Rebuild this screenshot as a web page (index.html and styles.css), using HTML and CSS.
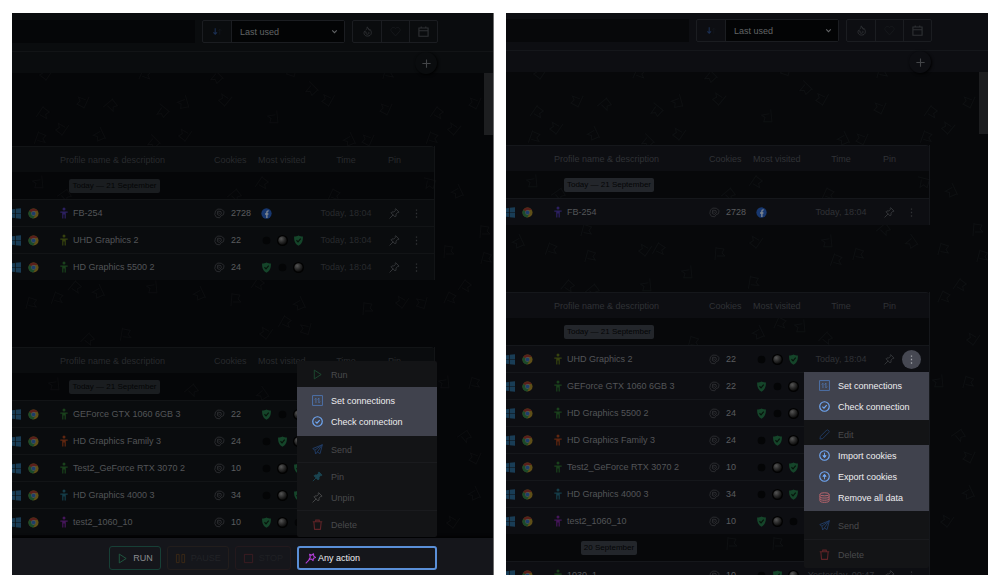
FILE: index.html
```
<!DOCTYPE html>
<html lang="en">
<head>
  <meta charset="utf-8">
  <title>Profiles</title>
  <link rel="stylesheet" href="styles.css">
</head>
<body>
  <!-- Icon sprite -->
  <svg class="sprite" aria-hidden="true">
    <defs>
      <radialGradient id="ballFill" cx="0.35" cy="0.3" r="0.8">
        <stop offset="0" stop-color="#555"/>
        <stop offset="0.5" stop-color="#2a2a2a"/>
        <stop offset="1" stop-color="#050505"/>
      </radialGradient>
    </defs>
    <symbol id="win" viewBox="0 0 12 12"><path fill="#1d4967" d="M0 1.5 5.4 1v4.6H0zM6.2.9 12 .3v5.3H6.2zM0 6.4h5.4V11L0 10.4zM6.2 6.4H12v5.3l-5.8-.6z"/></symbol>
    <symbol id="chrome" viewBox="0 0 12 12">
      <circle cx="6" cy="6" r="5.5" fill="#74601a"/>
      <path fill="#6e241d" d="M6 6 1.2 3.3A5.5 5.5 0 0 1 10.8 3.3H6z"/>
      <path fill="#1f5a31" d="M6 6 1.2 3.3A5.5 5.5 0 0 0 5.6 11.5L8.2 7.4z"/>
      <circle cx="6" cy="6" r="2.6" fill="#666"/>
      <circle cx="6" cy="6" r="2" fill="#204a80"/>
    </symbol>
    <symbol id="person" viewBox="0 0 8 12"><circle cx="4" cy="2" r="1.5" fill="currentColor"/><path d="M.3 5.2h7.4M4 4.6v3M2.8 5.4v6M5.2 5.4v6" fill="none" stroke="currentColor" stroke-width="1.2"/></symbol>
    <symbol id="cookie" viewBox="0 0 12 12"><path d="M4.2 1.2 8 1.4l3 2.4-.6 3.4-2.6 1.2-1.6 2.3-3.6-.6L.9 7.2l.7-4zM4 3.4l3.6.5.4 2.5-2.2 1.8L3.6 7zM4.6 5.3l1.7.6" fill="none" stroke="currentColor" stroke-width="0.9" stroke-linejoin="round"/></symbol>
    <symbol id="fb" viewBox="0 0 12 12"><circle cx="6" cy="6" r="5.6" fill="#17376f"/><path d="M6.4 11V5c0-1.3.6-1.9 2-1.8M4.4 6.6h3.7" fill="none" stroke="#7d8590" stroke-width="1.5"/></symbol>
    <symbol id="shield" viewBox="0 0 12 12"><path fill="#15452a" d="M6 .6c1.7.8 3 1 4.8 1 .2 4.8-1.1 8.2-4.8 10-3.7-1.800-5-5.200-4.800-10C3 1.600 4.300 1.400 6 .6z"/><path d="m3.800 5.700 1.700 1.800L8.400 4" fill="none" stroke="#07130b" stroke-width="1.300"/></symbol>
    <symbol id="dot" viewBox="0 0 12 12"><circle cx="6" cy="6" r="4.2" fill="#040506"/></symbol>
    <symbol id="ball" viewBox="0 0 12 12"><circle cx="6" cy="6" r="6" fill="#020202"/><circle cx="6" cy="6" r="4.6" fill="url(#ballFill)"/></symbol>
    <symbol id="pin" viewBox="0 0 12 12"><path d="M7.5 1 11 4.5l-1 .5-.4-.2-2 2 .1 2-1 1-4.500-4.500 1-1 2 .1 2-2-.2-.4zM4.300 7.700.9 11.100" fill="none" stroke="currentColor" stroke-linejoin="round" stroke-linecap="round"/></symbol>
    <symbol id="pin-solid" viewBox="0 0 12 12"><path d="M7.5 1 11 4.5l-1 .5-.4-.2-2 2 .1 2-1 1-4.500-4.500 1-1 2 .1 2-2-.2-.4zM4.300 7.700.9 11.100" fill="currentColor" stroke="currentColor" stroke-linejoin="round"/></symbol>
    <symbol id="dots" viewBox="0 0 12 12"><path d="M6 1.5v1.4M6 5.3v1.4M6 9.100v1.400" stroke="currentColor" stroke-width="1.400"/></symbol>
    <symbol id="play" viewBox="0 0 12 12"><path d="M2.500 1.200 10 6l-7.500 4.800z" fill="none" stroke="currentColor" stroke-linejoin="round"/></symbol>
    <symbol id="pause" viewBox="0 0 12 12"><path d="M1.500 1.500h3v9h-3zM7.500 1.500h3v9h-3z" fill="none" stroke="currentColor"/></symbol>
    <symbol id="stop" viewBox="0 0 12 12"><path d="M1.500 1.500h9v9h-9z" fill="none" stroke="currentColor"/></symbol>
    <symbol id="connections" viewBox="0 0 12 12"><path d="M.6.6h10.800v10.800H.6z" fill="none" stroke="currentColor"/><path d="M4.300 8.800V3.500M2.900 4.900l1.400-1.400M7.500 3.300v5.300M8.900 7.200 7.500 8.600M6.100 5l1.400-1.600" fill="none" stroke="currentColor" stroke-width="0.9"/></symbol>
    <symbol id="check" viewBox="0 0 12 12"><circle cx="6" cy="6" r="5.2" fill="none" stroke="currentColor" stroke-width="1.3"/><path d="m3.700 6.200 1.700 1.600 3-3.400" fill="none" stroke="currentColor" stroke-width="1.3"/></symbol>
    <symbol id="send" viewBox="0 0 12 12"><path d="M11.300.8.8 5l2.400 1.700L4 10.900l1.800-2.200 3 1.800zM3.200 6.700l8-5.900-5.400 7.900" fill="none" stroke="currentColor" stroke-linejoin="round"/></symbol>
    <symbol id="trash" viewBox="0 0 12 12"><path d="M.8 3h10.400M4 3V1.200h4V3M2 3l.8 8.300h6.400L10 3" fill="none" stroke="currentColor" stroke-width="1.2" stroke-linejoin="round"/></symbol>
    <symbol id="edit" viewBox="0 0 12 12"><path d="m1 11 .6-3L8.500 1.100q.6-.5 1.200 0l1.200 1.200q.5.6 0 1.200L4 10.400z" fill="none" stroke="currentColor" stroke-linejoin="round"/></symbol>
    <symbol id="import" viewBox="0 0 12 12"><circle cx="6" cy="6" r="5.2" fill="none" stroke="currentColor" stroke-width="1.2"/><path d="M6 3v4M4.200 6.200 6 8.500l1.800-2.300z" fill="currentColor" stroke="currentColor"/></symbol>
    <symbol id="export" viewBox="0 0 12 12"><circle cx="6" cy="6" r="5.2" fill="none" stroke="currentColor" stroke-width="1.2"/><path d="M6 9V5M4.200 5.800 6 3.500l1.800 2.300z" fill="currentColor" stroke="currentColor"/></symbol>
    <symbol id="data" viewBox="0 0 12 12"><path d="M1 2.600v7c0 1 2 1.700 5 1.700s5-.7 5-1.700v-7M1 5c0 1 2 1.600 5 1.600S11 6 11 5M1 7.400C1 8.400 3 9 6 9s5-.6 5-1.600" fill="none" stroke="currentColor"/><ellipse cx="6" cy="2.5" rx="5" ry="1.7" fill="none" stroke="currentColor"/></symbol>
    <symbol id="wand" viewBox="0 0 12 12"><path d="M.8 11.200 5 7M5 1.500l2.200 1L9.300.8l.2 2.600 2 1.400-2.300 1-.4 2.500-1.800-1.700-2.600.3 1.400-2.200z" fill="none" stroke="currentColor" stroke-width="1.2" stroke-linejoin="round"/></symbol>
    <symbol id="sort" viewBox="0 0 12 12"><path d="M3.500 2.500v6.500M1.500 7l2 2 2-2" fill="none" stroke="#1b2f52" stroke-width="1.2"/><path d="M8.500 9.500v-6M7 5l1.500-1.500L10 5" fill="none" stroke="#13161b"/></symbol>
    <symbol id="chevron" viewBox="0 0 12 12"><path d="m3.500 4.800 2.500 2.500 2.500-2.500" fill="none" stroke="currentColor" stroke-width="1.2"/></symbol>
    <symbol id="fire" viewBox="0 0 12 12"><path d="M5.500 1c2.600 1.400 1 3.200 2.400 3.800.6-.2.700-.8.500-1.300 3 2.800 2.200 7.500-2.300 7.500C2.300 11 1.300 7.600 3 5.400c.3 1 .8 1.300 1.600 1.200C3.800 7.800 4.500 9 6 9c1.800 0 2-1.700 1-2.600M5.500 1c.6 1.800-.5 2.700-1.500 3.500" fill="none" stroke="currentColor"/></symbol>
    <symbol id="heart" viewBox="0 0 12 12"><path d="M6 10.800 1.300 5.700C-.3 3 3.600-.2 6 2.800c2.400-3 6.300.2 4.700 2.900z" fill="none" stroke="currentColor"/></symbol>
    <symbol id="calendar" viewBox="0 0 12 12"><path d="M1 2.200h10v9H1zM1 5.200h10M3.500.5v1.700M8.500.5v1.700" fill="none" stroke="currentColor" stroke-width="1.2"/></symbol>
    <symbol id="plus" viewBox="0 0 12 12"><path d="M6 1.500v9M1.500 6h9" stroke="currentColor" stroke-width="1.2"/></symbol>

    <!-- Scattered flags behind the tables -->
    <g id="flag"><path d="M-4 7-3-6M-3-5l8 1-2 4 3 3-8 0"/></g>
    <symbol id="flags-top" overflow="visible">
      <g fill="none" stroke="currentColor">
        <use href="#flag" transform="translate(34 1) rotate(210)"/>
        <use href="#flag" transform="translate(133 1) rotate(20)"/>
        <use href="#flag" transform="translate(205 4) rotate(130)"/>
        <use href="#flag" transform="translate(280 -2) rotate(190)"/>
        <use href="#flag" transform="translate(376 0) rotate(10)"/>
        <use href="#flag" transform="translate(71 29) rotate(200)"/>
        <use href="#flag" transform="translate(99 32) rotate(45)"/>
        <use href="#flag" transform="translate(31 40) rotate(30)"/>
        <use href="#flag" transform="translate(151 38) rotate(125)"/>
        <use href="#flag" transform="translate(172 30) rotate(160)"/>
        <use href="#flag" transform="translate(213 27) rotate(215)"/>
        <use href="#flag" transform="translate(50 56) rotate(210)"/>
        <use href="#flag" transform="translate(28 65) rotate(15)"/>
        <use href="#flag" transform="translate(88 62) rotate(150)"/>
        <use href="#flag" transform="translate(142 69) rotate(130)"/>
        <use href="#flag" transform="translate(173 62) rotate(210)"/>
        <use href="#flag" transform="translate(300 16) rotate(130)"/>
        <use href="#flag" transform="translate(316 27) rotate(205)"/>
        <use href="#flag" transform="translate(374 36) rotate(200)"/>
        <use href="#flag" transform="translate(262 45) rotate(170)"/>
        <use href="#flag" transform="translate(425 40) rotate(30)"/>
        <use href="#flag" transform="translate(463 30) rotate(200)"/>
        <use href="#flag" transform="translate(442 56) rotate(215)"/>
        <use href="#flag" transform="translate(338 67) rotate(150)"/>
        <use href="#flag" transform="translate(356 67) rotate(200)"/>
        <use href="#flag" transform="translate(420 65) rotate(15)"/>
        <use href="#flag" transform="translate(27 110) rotate(170)"/>
        <use href="#flag" transform="translate(53 122) rotate(50)"/>
        <use href="#flag" transform="translate(223 122) rotate(45)"/>
        <use href="#flag" transform="translate(250 110) rotate(30)"/>
        <use href="#flag" transform="translate(322 122) rotate(20)"/>
        <use href="#flag" transform="translate(418 110) rotate(100)"/>
        <use href="#flag" transform="translate(446 119) rotate(150)"/>
        <use href="#flag" transform="translate(433 310) rotate(170)"/>
        <use href="#flag" transform="translate(462 310) rotate(10)"/>
        <use href="#flag" transform="translate(453 363) rotate(50)"/>
        <use href="#flag" transform="translate(463 385) rotate(200)"/>
        <use href="#flag" transform="translate(463 421) rotate(150)"/>
        <use href="#flag" transform="translate(441 449) rotate(210)"/>
      </g>
    </symbol>
  </svg>

  <main class="screens">
    <section class="panel panel-left">
      <header class="topbar">
        <input type="text" class="search" aria-label="Search profiles">
        <div class="group">
          <button class="tool" aria-label="Sort order"><svg class="icon"><use href="#sort"/></svg></button>
          <div class="select">
            <select aria-label="Sort by"><option>Last used</option></select>
            <svg class="icon"><use href="#chevron"/></svg>
          </div>
        </div>
        <div class="group">
          <button class="tool" aria-label="Hot"><svg class="icon"><use href="#fire"/></svg></button>
          <button class="tool tool-off" aria-label="Favorites"><svg class="icon"><use href="#heart"/></svg></button>
          <button class="tool" aria-label="Calendar"><svg class="icon"><use href="#calendar"/></svg></button>
        </div>
      </header>
      <div class="tabs"><button class="add" aria-label="Add tab"><svg class="icon"><use href="#plus"/></svg></button></div>

      <div class="content">
        <svg class="flags" aria-hidden="true">
          <use href="#flags-top"/>
          <g fill="none" stroke="currentColor">
            <use href="#flag" transform="translate(19 230) rotate(10)"/>
            <use href="#flag" transform="translate(45 225) rotate(15)"/>
            <use href="#flag" transform="translate(63 214) rotate(35)"/>
            <use href="#flag" transform="translate(87 219) rotate(150)"/>
            <use href="#flag" transform="translate(141 215) rotate(170)"/>
            <use href="#flag" transform="translate(188 221) rotate(150)"/>
            <use href="#flag" transform="translate(223 226) rotate(0)"/>
            <use href="#flag" transform="translate(246 211) rotate(30)"/>
            <use href="#flag" transform="translate(288 231) rotate(150)"/>
            <use href="#flag" transform="translate(355 235) rotate(0)"/>
            <use href="#flag" transform="translate(390 229) rotate(210)"/>
            <use href="#flag" transform="translate(410 230) rotate(190)"/>
            <use href="#flag" transform="translate(438 225) rotate(20)"/>
            <use href="#flag" transform="translate(453 213) rotate(30)"/>
            <use href="#flag" transform="translate(436 178) rotate(0)"/>
            <use href="#flag" transform="translate(472 158) rotate(0)"/>
            <use href="#flag" transform="translate(474 185) rotate(10)"/>
            <use href="#flag" transform="translate(273 249) rotate(25)"/>
            <use href="#flag" transform="translate(254 260) rotate(210)"/>
            <use href="#flag" transform="translate(294 256) rotate(190)"/>
            <use href="#flag" transform="translate(113 261) rotate(5)"/>
            <use href="#flag" transform="translate(76 266) rotate(40)"/>
            <use href="#flag" transform="translate(43 312) rotate(170)"/>
            <use href="#flag" transform="translate(180 317) rotate(45)"/>
            <use href="#flag" transform="translate(251 321) rotate(140)"/>
          </g>
        </svg>
        <div class="scrollbar"></div>

        <table class="profiles">
          <thead>
            <tr><th class="os"></th><th class="name">Profile name &amp; description</th><th class="cookies">Cookies</th><th class="visited">Most visited</th><th class="time">Time</th><th class="pin">Pin</th><th class="more"></th></tr>
          </thead>
          <tbody>
            <tr class="date"><td></td><td><span class="chip">Today — 21 September</span></td><td colspan="5"></td></tr>
            <tr>
              <td><div class="cell systems"><svg class="icon"><use href="#win"/></svg><svg class="icon"><use href="#chrome"/></svg></div></td>
              <td><div class="cell"><svg class="person purple"><use href="#person"/></svg>FB-254</div></td>
              <td><div class="cell count"><svg class="icon"><use href="#cookie"/></svg>2728</div></td>
              <td><div class="cell sites"><svg class="icon"><use href="#fb"/></svg></div></td>
              <td class="time">Today, 18:04</td>
              <td class="pin"><svg class="icon"><use href="#pin"/></svg></td>
              <td><button class="dots" aria-label="More"><svg class="icon"><use href="#dots"/></svg></button></td>
            </tr>
            <tr>
              <td><div class="cell systems"><svg class="icon"><use href="#win"/></svg><svg class="icon"><use href="#chrome"/></svg></div></td>
              <td><div class="cell"><svg class="person olive"><use href="#person"/></svg>UHD Graphics 2</div></td>
              <td><div class="cell count"><svg class="icon"><use href="#cookie"/></svg>22</div></td>
              <td><div class="cell sites"><svg class="icon"><use href="#dot"/></svg><svg class="icon"><use href="#ball"/></svg><svg class="icon"><use href="#shield"/></svg></div></td>
              <td class="time">Today, 18:04</td>
              <td class="pin"><svg class="icon"><use href="#pin"/></svg></td>
              <td><button class="dots" aria-label="More"><svg class="icon"><use href="#dots"/></svg></button></td>
            </tr>
            <tr>
              <td><div class="cell systems"><svg class="icon"><use href="#win"/></svg><svg class="icon"><use href="#chrome"/></svg></div></td>
              <td><div class="cell"><svg class="person green"><use href="#person"/></svg>HD Graphics 5500 2</div></td>
              <td><div class="cell count"><svg class="icon"><use href="#cookie"/></svg>24</div></td>
              <td><div class="cell sites"><svg class="icon"><use href="#shield"/></svg><svg class="icon"><use href="#dot"/></svg><svg class="icon"><use href="#ball"/></svg></div></td>
              <td class="time">Today, 18:04</td>
              <td class="pin"><svg class="icon"><use href="#pin"/></svg></td>
              <td><button class="dots" aria-label="More"><svg class="icon"><use href="#dots"/></svg></button></td>
            </tr>
          </tbody>
        </table>

        <table class="profiles">
          <thead>
            <tr><th class="os"></th><th class="name">Profile name &amp; description</th><th class="cookies">Cookies</th><th class="visited">Most visited</th><th class="time">Time</th><th class="pin">Pin</th><th class="more"></th></tr>
          </thead>
          <tbody>
            <tr class="date"><td></td><td><span class="chip">Today — 21 September</span></td><td colspan="5"></td></tr>
            <tr>
              <td><div class="cell systems"><svg class="icon"><use href="#win"/></svg><svg class="icon"><use href="#chrome"/></svg></div></td>
              <td><div class="cell"><svg class="person green"><use href="#person"/></svg>GEForce GTX 1060 6GB 3</div></td>
              <td><div class="cell count"><svg class="icon"><use href="#cookie"/></svg>22</div></td>
              <td><div class="cell sites"><svg class="icon"><use href="#shield"/></svg><svg class="icon"><use href="#dot"/></svg><svg class="icon"><use href="#ball"/></svg></div></td>
              <td colspan="3"></td>
            </tr>
            <tr>
              <td><div class="cell systems"><svg class="icon"><use href="#win"/></svg><svg class="icon"><use href="#chrome"/></svg></div></td>
              <td><div class="cell"><svg class="person orange"><use href="#person"/></svg>HD Graphics Family 3</div></td>
              <td><div class="cell count"><svg class="icon"><use href="#cookie"/></svg>24</div></td>
              <td><div class="cell sites"><svg class="icon"><use href="#dot"/></svg><svg class="icon"><use href="#shield"/></svg><svg class="icon"><use href="#ball"/></svg></div></td>
              <td colspan="3"></td>
            </tr>
            <tr>
              <td><div class="cell systems"><svg class="icon"><use href="#win"/></svg><svg class="icon"><use href="#chrome"/></svg></div></td>
              <td><div class="cell"><svg class="person green"><use href="#person"/></svg>Test2_GeForce RTX 3070 2</div></td>
              <td><div class="cell count"><svg class="icon"><use href="#cookie"/></svg>10</div></td>
              <td><div class="cell sites"><svg class="icon"><use href="#dot"/></svg><svg class="icon"><use href="#ball"/></svg><svg class="icon"><use href="#shield"/></svg></div></td>
              <td colspan="3"></td>
            </tr>
            <tr>
              <td><div class="cell systems"><svg class="icon"><use href="#win"/></svg><svg class="icon"><use href="#chrome"/></svg></div></td>
              <td><div class="cell"><svg class="person teal"><use href="#person"/></svg>HD Graphics 4000 3</div></td>
              <td><div class="cell count"><svg class="icon"><use href="#cookie"/></svg>34</div></td>
              <td><div class="cell sites"><svg class="icon"><use href="#dot"/></svg><svg class="icon"><use href="#ball"/></svg><svg class="icon"><use href="#shield"/></svg></div></td>
              <td colspan="3"></td>
            </tr>
            <tr>
              <td><div class="cell systems"><svg class="icon"><use href="#win"/></svg><svg class="icon"><use href="#chrome"/></svg></div></td>
              <td><div class="cell"><svg class="person violet"><use href="#person"/></svg>test2_1060_10</div></td>
              <td><div class="cell count"><svg class="icon"><use href="#cookie"/></svg>10</div></td>
              <td><div class="cell sites"><svg class="icon"><use href="#shield"/></svg><svg class="icon"><use href="#ball"/></svg><svg class="icon"><use href="#dot"/></svg></div></td>
              <td colspan="3"></td>
            </tr>
          </tbody>
        </table>
      </div>

      <footer class="actions">
        <button class="action run"><svg class="icon"><use href="#play"/></svg>RUN</button>
        <button class="action pause" disabled><svg class="icon"><use href="#pause"/></svg>PAUSE</button>
        <button class="action stop" disabled><svg class="icon"><use href="#stop"/></svg>STOP</button>
        <div class="any">
          <button class="any-button" aria-haspopup="menu" aria-expanded="true"><svg class="icon"><use href="#wand"/></svg>Any action</button>
          <div class="menu menu-up" role="menu">
            <div class="menu-group">
              <button class="item" role="menuitem"><svg class="icon run-color"><use href="#play"/></svg>Run</button>
            </div>
            <div class="menu-group lit">
              <button class="item" role="menuitem"><svg class="icon steel"><use href="#connections"/></svg>Set connections</button>
              <button class="item" role="menuitem"><svg class="icon blue"><use href="#check"/></svg>Check connection</button>
            </div>
            <div class="menu-group">
              <button class="item" role="menuitem"><svg class="icon send-color"><use href="#send"/></svg>Send</button>
            </div>
            <div class="menu-group ruled">
              <button class="item" role="menuitem"><svg class="icon pin-color"><use href="#pin-solid"/></svg>Pin</button>
              <button class="item" role="menuitem"><svg class="icon"><use href="#pin"/></svg>Unpin</button>
            </div>
            <div class="menu-group ruled">
              <button class="item" role="menuitem"><svg class="icon trash-color"><use href="#trash"/></svg>Delete</button>
            </div>
          </div>
        </div>
      </footer>
    </section>

    <section class="panel panel-right">
      <header class="topbar">
        <input type="text" class="search" aria-label="Search profiles">
        <div class="group">
          <button class="tool" aria-label="Sort order"><svg class="icon"><use href="#sort"/></svg></button>
          <div class="select">
            <select aria-label="Sort by"><option>Last used</option></select>
            <svg class="icon"><use href="#chevron"/></svg>
          </div>
        </div>
        <div class="group">
          <button class="tool" aria-label="Hot"><svg class="icon"><use href="#fire"/></svg></button>
          <button class="tool tool-off" aria-label="Favorites"><svg class="icon"><use href="#heart"/></svg></button>
          <button class="tool" aria-label="Calendar"><svg class="icon"><use href="#calendar"/></svg></button>
        </div>
      </header>
      <div class="tabs"><button class="add" aria-label="Add tab"><svg class="icon"><use href="#plus"/></svg></button></div>

      <div class="content">
        <svg class="flags" aria-hidden="true">
          <use href="#flags-top"/>
          <g fill="none" stroke="currentColor">
            <use href="#flag" transform="translate(13 170) rotate(150)"/>
            <use href="#flag" transform="translate(45 177) rotate(15)"/>
            <use href="#flag" transform="translate(80 158) rotate(10)"/>
            <use href="#flag" transform="translate(84 184) rotate(10)"/>
            <use href="#flag" transform="translate(139 178) rotate(210)"/>
            <use href="#flag" transform="translate(153 177) rotate(25)"/>
            <use href="#flag" transform="translate(213 181) rotate(0)"/>
            <use href="#flag" transform="translate(182 201) rotate(170)"/>
            <use href="#flag" transform="translate(62 214) rotate(35)"/>
            <use href="#flag" transform="translate(87 218) rotate(45)"/>
            <use href="#flag" transform="translate(141 214) rotate(170)"/>
            <use href="#flag" transform="translate(250 170) rotate(210)"/>
            <use href="#flag" transform="translate(247 210) rotate(5)"/>
            <use href="#flag" transform="translate(322 170) rotate(170)"/>
            <use href="#flag" transform="translate(330 188) rotate(15)"/>
            <use href="#flag" transform="translate(352 182) rotate(10)"/>
            <use href="#flag" transform="translate(378 157) rotate(45)"/>
            <use href="#flag" transform="translate(406 170) rotate(140)"/>
            <use href="#flag" transform="translate(437 177) rotate(10)"/>
            <use href="#flag" transform="translate(471 157) rotate(0)"/>
            <use href="#flag" transform="translate(476 184) rotate(10)"/>
            <use href="#flag" transform="translate(454 213) rotate(30)"/>
            <use href="#flag" transform="translate(438 225) rotate(20)"/>
            <use href="#flag" transform="translate(467 267) rotate(210)"/>
            <use href="#flag" transform="translate(253 261) rotate(150)"/>
            <use href="#flag" transform="translate(274 251) rotate(20)"/>
            <use href="#flag" transform="translate(295 255) rotate(170)"/>
            <use href="#flag" transform="translate(320 266) rotate(40)"/>
            <use href="#flag" transform="translate(187 270) rotate(10)"/>
            <use href="#flag" transform="translate(225 471) rotate(0)"/>
            <use href="#flag" transform="translate(271 471) rotate(0)"/>
          </g>
        </svg>
        <div class="scrollbar"></div>

        <table class="profiles">
          <thead>
            <tr><th class="os"></th><th class="name">Profile name &amp; description</th><th class="cookies">Cookies</th><th class="visited">Most visited</th><th class="time">Time</th><th class="pin">Pin</th><th class="more"></th></tr>
          </thead>
          <tbody>
            <tr class="date"><td></td><td><span class="chip">Today — 21 September</span></td><td colspan="5"></td></tr>
            <tr>
              <td><div class="cell systems"><svg class="icon"><use href="#win"/></svg><svg class="icon"><use href="#chrome"/></svg></div></td>
              <td><div class="cell"><svg class="person purple"><use href="#person"/></svg>FB-254</div></td>
              <td><div class="cell count"><svg class="icon"><use href="#cookie"/></svg>2728</div></td>
              <td><div class="cell sites"><svg class="icon"><use href="#fb"/></svg></div></td>
              <td class="time">Today, 18:04</td>
              <td class="pin"><svg class="icon"><use href="#pin"/></svg></td>
              <td><button class="dots" aria-label="More"><svg class="icon"><use href="#dots"/></svg></button></td>
            </tr>
          </tbody>
        </table>

        <table class="profiles">
          <thead>
            <tr><th class="os"></th><th class="name">Profile name &amp; description</th><th class="cookies">Cookies</th><th class="visited">Most visited</th><th class="time">Time</th><th class="pin">Pin</th><th class="more"></th></tr>
          </thead>
          <tbody>
            <tr class="date"><td></td><td><span class="chip">Today — 21 September</span></td><td colspan="5"></td></tr>
            <tr>
              <td><div class="cell systems"><svg class="icon"><use href="#win"/></svg><svg class="icon"><use href="#chrome"/></svg></div></td>
              <td><div class="cell"><svg class="person olive"><use href="#person"/></svg>UHD Graphics 2</div></td>
              <td><div class="cell count"><svg class="icon"><use href="#cookie"/></svg>22</div></td>
              <td><div class="cell sites"><svg class="icon"><use href="#dot"/></svg><svg class="icon"><use href="#ball"/></svg><svg class="icon"><use href="#shield"/></svg></div></td>
              <td class="time">Today, 18:04</td>
              <td class="pin"><svg class="icon"><use href="#pin"/></svg></td>
              <td class="anchor">
                <button class="dots open" aria-label="More" aria-haspopup="menu" aria-expanded="true"><svg class="icon"><use href="#dots"/></svg></button>
                <div class="menu menu-down" role="menu">
                  <div class="menu-group lit">
                    <button class="item" role="menuitem"><svg class="icon steel"><use href="#connections"/></svg>Set connections</button>
                    <button class="item" role="menuitem"><svg class="icon blue"><use href="#check"/></svg>Check connection</button>
                  </div>
                  <div class="menu-group edit">
                    <button class="item" role="menuitem"><svg class="icon send-color"><use href="#edit"/></svg>Edit</button>
                  </div>
                  <div class="menu-group lit data">
                    <button class="item" role="menuitem"><svg class="icon blue"><use href="#import"/></svg>Import cookies</button>
                    <button class="item" role="menuitem"><svg class="icon blue"><use href="#export"/></svg>Export cookies</button>
                    <button class="item" role="menuitem"><svg class="icon red"><use href="#data"/></svg>Remove all data</button>
                  </div>
                  <div class="menu-group">
                    <button class="item" role="menuitem"><svg class="icon send-color"><use href="#send"/></svg>Send</button>
                  </div>
                  <div class="menu-group ruled">
                    <button class="item" role="menuitem"><svg class="icon trash-color"><use href="#trash"/></svg>Delete</button>
                  </div>
                </div>
              </td>
            </tr>
            <tr>
              <td><div class="cell systems"><svg class="icon"><use href="#win"/></svg><svg class="icon"><use href="#chrome"/></svg></div></td>
              <td><div class="cell"><svg class="person green"><use href="#person"/></svg>GEForce GTX 1060 6GB 3</div></td>
              <td><div class="cell count"><svg class="icon"><use href="#cookie"/></svg>22</div></td>
              <td><div class="cell sites"><svg class="icon"><use href="#shield"/></svg><svg class="icon"><use href="#dot"/></svg><svg class="icon"><use href="#ball"/></svg></div></td>
              <td colspan="3"></td>
            </tr>
            <tr>
              <td><div class="cell systems"><svg class="icon"><use href="#win"/></svg><svg class="icon"><use href="#chrome"/></svg></div></td>
              <td><div class="cell"><svg class="person green"><use href="#person"/></svg>HD Graphics 5500 2</div></td>
              <td><div class="cell count"><svg class="icon"><use href="#cookie"/></svg>24</div></td>
              <td><div class="cell sites"><svg class="icon"><use href="#shield"/></svg><svg class="icon"><use href="#dot"/></svg><svg class="icon"><use href="#ball"/></svg></div></td>
              <td colspan="3"></td>
            </tr>
            <tr>
              <td><div class="cell systems"><svg class="icon"><use href="#win"/></svg><svg class="icon"><use href="#chrome"/></svg></div></td>
              <td><div class="cell"><svg class="person orange"><use href="#person"/></svg>HD Graphics Family 3</div></td>
              <td><div class="cell count"><svg class="icon"><use href="#cookie"/></svg>24</div></td>
              <td><div class="cell sites"><svg class="icon"><use href="#dot"/></svg><svg class="icon"><use href="#shield"/></svg><svg class="icon"><use href="#ball"/></svg></div></td>
              <td colspan="3"></td>
            </tr>
            <tr>
              <td><div class="cell systems"><svg class="icon"><use href="#win"/></svg><svg class="icon"><use href="#chrome"/></svg></div></td>
              <td><div class="cell"><svg class="person green"><use href="#person"/></svg>Test2_GeForce RTX 3070 2</div></td>
              <td><div class="cell count"><svg class="icon"><use href="#cookie"/></svg>10</div></td>
              <td><div class="cell sites"><svg class="icon"><use href="#dot"/></svg><svg class="icon"><use href="#ball"/></svg><svg class="icon"><use href="#shield"/></svg></div></td>
              <td colspan="3"></td>
            </tr>
            <tr>
              <td><div class="cell systems"><svg class="icon"><use href="#win"/></svg><svg class="icon"><use href="#chrome"/></svg></div></td>
              <td><div class="cell"><svg class="person teal"><use href="#person"/></svg>HD Graphics 4000 3</div></td>
              <td><div class="cell count"><svg class="icon"><use href="#cookie"/></svg>34</div></td>
              <td><div class="cell sites"><svg class="icon"><use href="#dot"/></svg><svg class="icon"><use href="#ball"/></svg><svg class="icon"><use href="#shield"/></svg></div></td>
              <td colspan="3"></td>
            </tr>
            <tr>
              <td><div class="cell systems"><svg class="icon"><use href="#win"/></svg><svg class="icon"><use href="#chrome"/></svg></div></td>
              <td><div class="cell"><svg class="person violet"><use href="#person"/></svg>test2_1060_10</div></td>
              <td><div class="cell count"><svg class="icon"><use href="#cookie"/></svg>10</div></td>
              <td><div class="cell sites"><svg class="icon"><use href="#shield"/></svg><svg class="icon"><use href="#ball"/></svg><svg class="icon"><use href="#dot"/></svg></div></td>
              <td colspan="3"></td>
            </tr>
            <tr class="date"><td></td><td><span class="chip">20 September</span></td><td colspan="5"></td></tr>
            <tr>
              <td><div class="cell systems"><svg class="icon"><use href="#win"/></svg><svg class="icon"><use href="#chrome"/></svg></div></td>
              <td><div class="cell"><svg class="person green"><use href="#person"/></svg>1030_1</div></td>
              <td><div class="cell count"><svg class="icon"><use href="#cookie"/></svg>10</div></td>
              <td><div class="cell sites"><svg class="icon"><use href="#dot"/></svg><svg class="icon"><use href="#shield"/></svg><svg class="icon"><use href="#ball"/></svg></div></td>
              <td class="time">Yesterday, 00:47</td>
              <td class="pin"><svg class="icon"><use href="#pin"/></svg></td>
              <td><button class="dots" aria-label="More"><svg class="icon"><use href="#dots"/></svg></button></td>
            </tr>
          </tbody>
        </table>
      </div>
    </section>
  </main>
</body>
</html>
```

FILE: styles.css
```
* {
  box-sizing: border-box;
}

body {
  margin: 0;
  background: #fff;
  font-family: "Liberation Sans", Arial, sans-serif;
  font-size: 9px;
  line-height: 12px;
}

button,
input,
select {
  margin: 0;
  padding: 0;
  border: none;
  background: none;
  color: inherit;
  font: inherit;
}

button {
  cursor: pointer;
}

.sprite {
  position: absolute;
  width: 0;
  height: 0;
}

.icon {
  display: block;
  flex: none;
  width: 11px;
  height: 11px;
}

.screens {
  display: grid;
  grid-template-columns: 1fr 1fr;
  gap: 12px;
  height: 100vh;
  padding: 13px 12px 10px;
}

.panel {
  --bar: #0d0e12;
  --bg: #07080a;
  --line: #15171b;
  --chip: #23262b;
  --label: #303236;
  --flag: #0e1012;
  display: flex;
  flex-direction: column;
  min-width: 0;
  min-height: 0;
  overflow: hidden;
  background: var(--bg);
  color: #535558;
}

.panel-left {
  --bar: #0a0c0e;
  --bg: #050608;
  --line: #121416;
  --chip: #1a1d20;
  --label: #282a2d;
  --flag: #0c0d0f;
  border-right: 1px solid #6d6d6e;
}

/* Top bar */
.topbar {
  display: flex;
  gap: 7px;
  padding: 6px 56px 8px 0;
  border-bottom: 1px solid var(--line);
  background: var(--bar);
}

.panel-left .topbar {
  padding: 7px 55px 8px 0;
}

.search {
  flex: 1;
  min-width: 0;
  background: var(--bg);
}

.group {
  display: flex;
  height: 23px;
  border: 1px solid #1b1d21;
  border-radius: 2px;
}

.tool {
  display: flex;
  align-items: center;
  justify-content: center;
  width: 28px;
  color: #2f3134;
}

.tool + .tool,
.select {
  border-left: 1px solid #1b1d21;
}

.tool-off {
  color: #17191c;
}

.select {
  display: flex;
  align-items: center;
  width: 113px;
  padding-right: 4px;
  background: #030405;
  color: #626466;
}

.select select {
  flex: 1;
  height: 100%;
  padding-left: 8px;
  appearance: none;
}

.tabs {
  display: flex;
  justify-content: flex-end;
  height: 21px;
  padding-right: 57px;
  background: var(--bar);
}

.panel-left .tabs {
  padding-right: 56px;
}

.add {
  display: flex;
  align-items: center;
  justify-content: center;
  z-index: 1;
  width: 22px;
  height: 22px;
  border-radius: 50%;
  background: var(--bar);
  box-shadow: 1px 1px 3px #000;
  color: #434548;
}

/* Content */
.content {
  position: relative;
  flex: 1;
  min-height: 0;
  overflow: hidden;
  padding: 73px 59px 0 0;
}

.flags {
  position: absolute;
  top: 0;
  left: 0;
  width: 100%;
  height: 100%;
  color: var(--flag);
}

.scrollbar {
  position: absolute;
  top: 0;
  right: 0;
  width: 9px;
  height: 62px;
  background: #1d1e20;
}

.profiles {
  position: relative;
  width: 100%;
  margin-bottom: 67px;
  table-layout: fixed;
  border-spacing: 0;
  box-shadow: 1px 0 0 var(--line);
}

.profiles th,
.profiles td {
  height: 27px;
  padding: 0;
  background: var(--bar);
  text-align: left;
  white-space: nowrap;
}

.profiles th {
  height: 26px;
  border-top: 1px solid var(--line);
  color: var(--label);
  font-weight: normal;
}

.profiles th:last-child {
  border-top-right-radius: 3px;
}

.profiles td {
  border-top: 1px solid var(--line);
}

.profiles .date td {
  border-top: none;
  background: none;
  text-align: center;
}

.profiles .date td:nth-child(2) {
  padding-right: 45px;
}

.os {
  width: 48px;
}

.cookies {
  width: 44px;
}

.visited {
  width: 52px;
}

.profiles .time {
  width: 72px;
  color: var(--label);
  text-align: center;
}

.profiles .pin {
  width: 25px;
  text-align: center;
}

.profiles td.pin {
  color: #36383b;
}

.pin .icon {
  margin: 0 auto;
}

.more {
  width: 27px;
}

.chip {
  display: inline-block;
  padding: 1px 3px;
  border-radius: 2px;
  background: var(--chip);
  color: #040506;
  font-size: 8px;
}

.cell {
  display: flex;
  align-items: center;
  gap: 5px;
}

.systems {
  gap: 7px;
  margin-left: -2px;
  opacity: 0.8;
}

.count {
  gap: 6px;
  color: #5a5c5f;
}

.count .icon {
  color: #2f3134;
}

.sites {
  padding-left: 3px;
}

.person {
  width: 8px;
  height: 12px;
}

.purple {
  color: #2c2060;
}

.olive {
  color: #36420f;
}

.green {
  color: #1a411c;
}

.orange {
  color: #5f2610;
}

.teal {
  color: #153d49;
}

.violet {
  color: #45165a;
}

.dots {
  display: flex;
  align-items: center;
  justify-content: center;
  width: 19px;
  height: 19px;
  border-radius: 50%;
  color: #303235;
}

.dots.open {
  background: #464852;
  color: #a4a5aa;
}

.anchor {
  position: relative;
}

/* Menus */
.menu {
  position: absolute;
  right: 0;
  z-index: 2;
  border-radius: 2px;
  background: #131416;
  color: #494a4c;
}

.menu-up {
  bottom: 100%;
  width: 100%;
  margin-bottom: 9px;
}

.menu-down {
  top: 100%;
  width: 125px;
}

.menu-group {
  padding: 3px 0 2px;
}

.menu-down .menu-group {
  padding: 4px 0 3px;
}

.menu-group.ruled {
  border-top: 1px solid #1a1b1e;
}

.menu-group.lit {
  padding: 3px 0 4px;
  background: #40424d;
  color: #eeeef0;
}

.menu-down .lit {
  padding: 3px 0;
}

.menu-down .edit {
  padding: 4px 0 0;
}

.menu-down .data {
  padding: 0 0 3px;
}

.item {
  display: flex;
  align-items: center;
  gap: 8px;
  width: 100%;
  height: 21px;
  padding-left: 15px;
}

.run-color {
  color: #1c4a30;
}

.steel {
  color: #4e74ae;
}

.blue {
  color: #6fa8f5;
}

.red {
  color: #c0666f;
}

.send-color {
  color: #213c66;
}

.pin-color {
  color: #1a4450;
}

.trash-color {
  color: #5f2327;
}

/* Bottom actions */
.actions {
  position: relative;
  z-index: 3;
  display: flex;
  justify-content: flex-end;
  gap: 6px;
  padding: 8px 56px 5px 0;
  background: #15161b;
  box-shadow: 0 -1px 3px #000;
}

.action {
  display: flex;
  align-items: center;
  gap: 5px;
  height: 24px;
  padding: 0 7px;
  border: 1px solid;
  border-radius: 3px;
}

.run {
  border-color: #173f36;
  color: #8a8c8f;
}

.run .icon {
  color: #205a42;
}

.pause {
  border-color: #221d1c;
  color: #222327;
}

.pause .icon {
  color: #3c2a16;
}

.stop {
  border-color: #23191d;
  color: #1f2024;
}

.stop .icon {
  color: #3d1d22;
}

.any {
  position: relative;
  width: 140px;
}

.any-button {
  display: flex;
  align-items: center;
  gap: 2px;
  width: 100%;
  height: 24px;
  padding-left: 6px;
  border: 2px solid #5a8fd8;
  border-radius: 3px;
  color: #eeeef0;
}

.any-button .icon {
  color: #b23fd6;
}
```
